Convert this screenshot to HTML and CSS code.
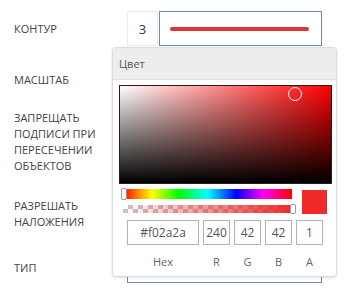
FILE: index.html
```html
<!DOCTYPE html>
<html lang="ru">
<head>
    <meta charset="UTF-8">
    <title>Стиль</title>
    <link rel="stylesheet" href="styles.css">
</head>
<body>

    <!-- Settings form -->
    <div class="form">
        <div class="row row-contour">
            <div class="label">КОНТУР</div>
            <div class="control">
                <div class="width-box">3</div>
                <div class="color-box"><span class="stroke"></span></div>
            </div>
        </div>
        <div class="row row-scale">
            <div class="label">МАСШТАБ</div>
        </div>
        <div class="row row-forbid">
            <div class="label">ЗАПРЕЩАТЬ<br>ПОДПИСИ ПРИ<br>ПЕРЕСЕЧЕНИИ<br>ОБЪЕКТОВ</div>
        </div>
        <div class="row row-allow">
            <div class="label">РАЗРЕШАТЬ<br>НАЛОЖЕНИЯ</div>
        </div>
        <div class="row row-type">
            <div class="label">ТИП</div>
            <div class="control">
                <div class="select-box"></div>
            </div>
        </div>
    </div>

    <!-- Color picker popup -->
    <div class="picker">
        <div class="picker-header">Цвет</div>
        <div class="picker-body">
            <div class="saturation">
                <div class="sat-cursor"></div>
            </div>
            <div class="slider-row">
                <div class="sliders">
                    <div class="hue">
                        <div class="handle handle-hue"></div>
                    </div>
                    <div class="alpha">
                        <div class="alpha-fill"></div>
                        <div class="handle handle-alpha"></div>
                    </div>
                </div>
                <div class="swatch"></div>
            </div>
            <div class="fields">
                <div class="field">#f02a2a</div>
                <div class="field">240</div>
                <div class="field">42</div>
                <div class="field">42</div>
                <div class="field">1</div>
            </div>
            <div class="fields field-labels">
                <div>Hex</div>
                <div>R</div>
                <div>G</div>
                <div>B</div>
                <div>A</div>
            </div>
        </div>
    </div>

</body>
</html>
```

FILE: styles.css
```css
/* General body styling */
body {
    margin: 0;
    padding: 0;
    background-color: #fff;
    font-family: "Open Sans", "Liberation Sans", sans-serif;
    color: #333;
    position: relative;
    overflow: hidden;
}

/* Form rows */
.form {
    display: flex;
    flex-direction: column;
    padding-top: 11px;
}

.row {
    display: flex;
    align-items: center;
}

.label {
    width: 113px;
    padding-left: 14px;
    box-sizing: border-box;
    font-size: 11px;
    line-height: 16px;
    color: #444;
}

.control {
    display: flex;
    align-items: stretch;
    height: 100%;
}

.row-contour { height: 35px; }
.row-scale { height: 35px; margin-top: 16px; }
.row-forbid { height: 64px; margin-top: 13px; }
.row-allow { height: 32px; margin-top: 24px; }
.row-type { height: 30px; margin-top: 23px; }

/* Contour width + color */
.width-box {
    width: 31px;
    box-sizing: border-box;
    border: 1px solid #ececec;
    display: flex;
    align-items: center;
    justify-content: center;
    font-size: 13px;
    color: #333;
    margin-left: 14px;
}

.color-box {
    width: 163px;
    box-sizing: border-box;
    border: 1px solid #6f89b1;
    margin-left: 1px;
    display: flex;
    align-items: center;
    padding: 0 12px 0 10px;
}

.stroke {
    flex: 1;
    height: 4px;
    border-radius: 2px;
    background-color: #e0353b;
}

.select-box {
    width: 195px;
    height: 30px;
    box-sizing: border-box;
    border: 1px solid #6f89b1;
    margin-left: 14px;
}

/* Color picker popup */
.picker {
    position: absolute;
    top: 47px;
    left: 112px;
    width: 225px;
    height: 230px;
    box-sizing: border-box;
    background-color: #fff;
    border: 1px solid #dcdcdc;
    border-radius: 4px;
    box-shadow: 0 1px 3px rgba(0, 0, 0, 0.12);
    overflow: hidden;
    z-index: 10;
}

.picker-header {
    height: 31px;
    background-color: #ededed;
    border-bottom: 1px solid #e0e0e0;
    display: flex;
    align-items: center;
    padding-left: 6px;
    font-size: 11px;
    color: #555;
}

.picker-body {
    padding: 5px 4px 0 6px;
}

.saturation {
    position: relative;
    height: 99px;
    box-sizing: border-box;
    border: 1px solid #2a1a1a;
    background:
        linear-gradient(to top, #000, rgba(0, 0, 0, 0)),
        linear-gradient(to right, #fff, #f00);
}

.sat-cursor {
    position: absolute;
    left: 168px;
    top: 1px;
    width: 14px;
    height: 14px;
    box-sizing: border-box;
    border: 1px solid #fff;
    border-radius: 50%;
}

.slider-row {
    display: flex;
    margin-top: 5px;
    height: 25px;
}

.sliders {
    width: 169px;
    margin-left: 4px;
    display: flex;
    flex-direction: column;
}

.hue {
    position: relative;
    height: 10px;
    background: linear-gradient(to right, #f00 0%, #ff0 17%, #0f0 33%, #0ff 50%, #00f 67%, #f0f 83%, #f00 100%);
}

.alpha {
    position: relative;
    height: 8px;
    margin-top: 6px;
    background-color: #fff;
    background-image:
        linear-gradient(45deg, #c4c4c4 25%, transparent 25%, transparent 75%, #c4c4c4 75%),
        linear-gradient(45deg, #c4c4c4 25%, transparent 25%, transparent 75%, #c4c4c4 75%);
    background-size: 10px 8px;
    background-position: 0 0, 5px 4px;
}

.alpha-fill {
    height: 100%;
    background: linear-gradient(to right, rgba(240, 42, 42, 0), #f02a2a);
}

.handle {
    position: absolute;
    width: 4px;
    background-color: #fff;
    border: 1px solid #999;
    border-radius: 2px;
}

.handle-hue { left: -2px; top: -1px; height: 10px; }
.handle-alpha { right: -4px; top: -1px; height: 8px; }

.swatch {
    width: 25px;
    height: 24px;
    margin-left: 10px;
    margin-top: 1px;
    background-color: #f02a2a;
}

/* RGBA inputs */
.fields {
    display: grid;
    grid-template-columns: 72px 27px 27px 27px 27px;
    column-gap: 4px;
    margin-left: 8px;
    margin-top: 6px;
}

.field {
    height: 25px;
    box-sizing: border-box;
    border: 1px solid #b3b3b3;
    display: flex;
    align-items: center;
    justify-content: center;
    font-size: 12px;
    color: #555;
}

.field-labels {
    margin-top: 9px;
    font-size: 11px;
    line-height: 16px;
    color: #666;
    text-align: center;
}
```
